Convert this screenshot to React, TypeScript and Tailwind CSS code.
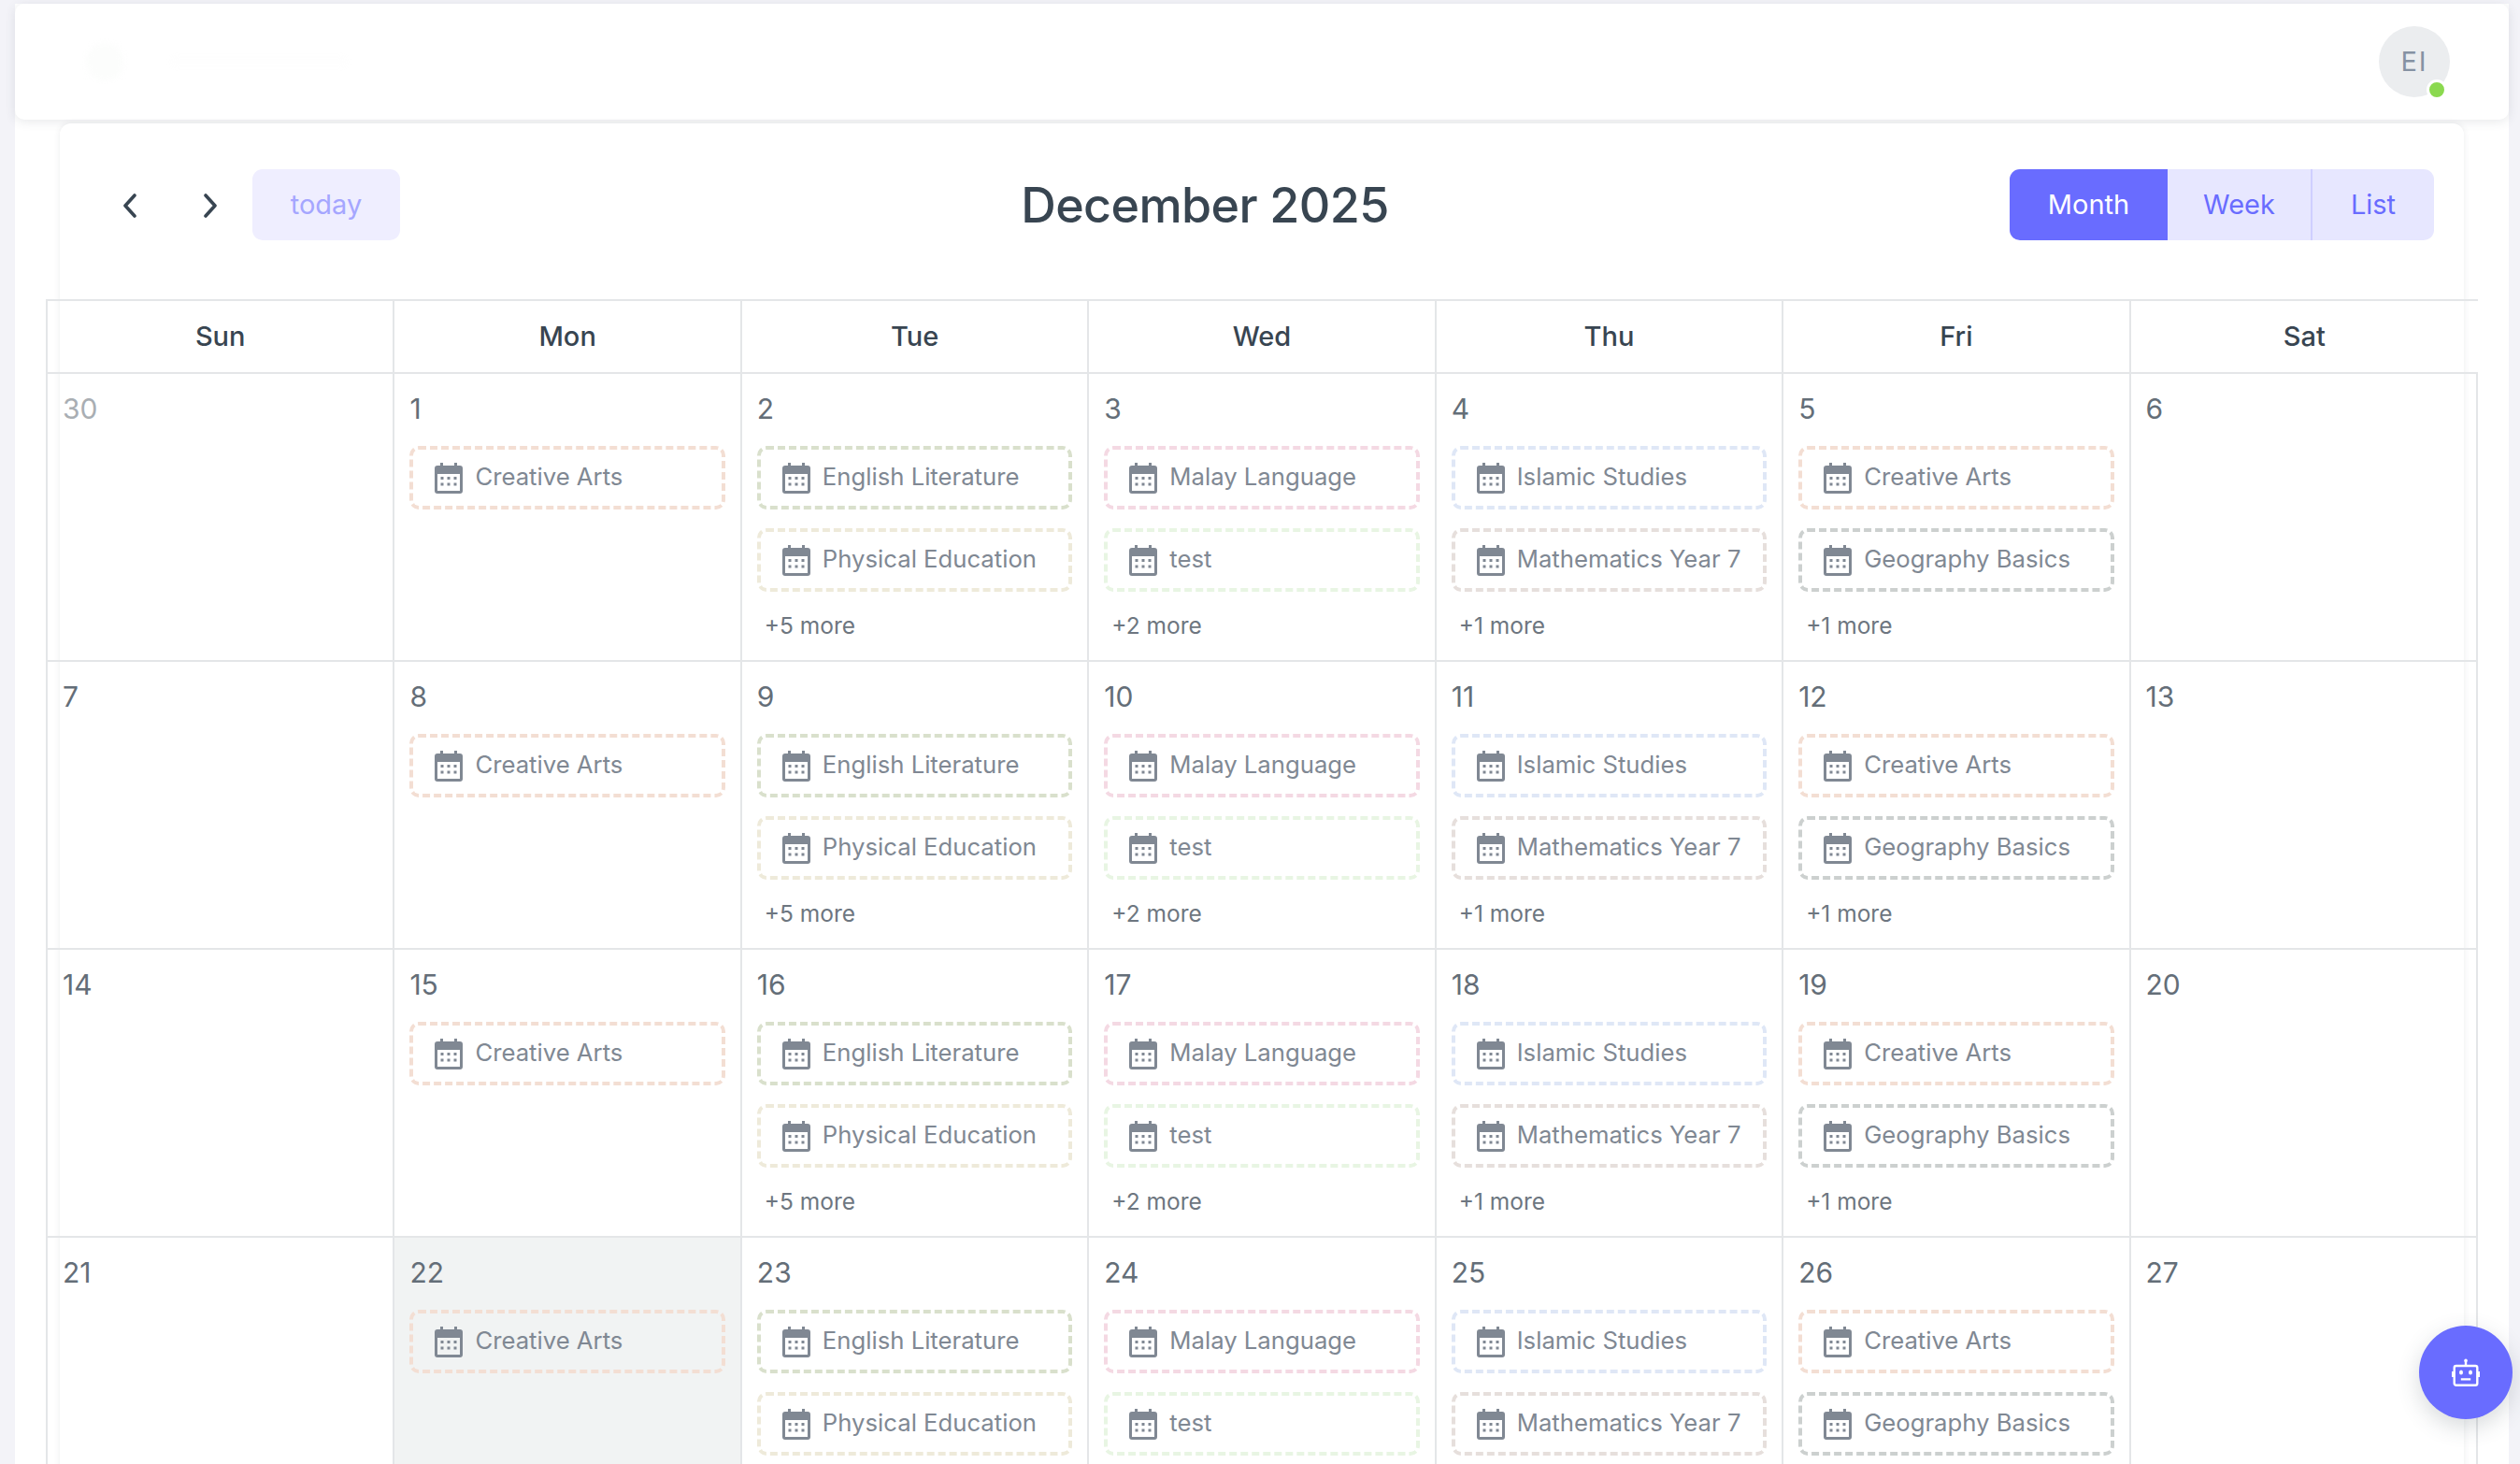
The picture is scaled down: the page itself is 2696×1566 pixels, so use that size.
import { FC } from "react";

interface EventItem {
  title: string;
  border: string;
}

const creative = { title: "Creative Arts", border: "border-[#f3ded3]" };

const columns: { events: EventItem[]; more?: string }[] = [
  { events: [] },
  { events: [creative] },
  {
    events: [
      { title: "English Literature", border: "border-[#d9e0cc]" },
      { title: "Physical Education", border: "border-[#eeeada]" },
    ],
    more: "+5 more",
  },
  {
    events: [
      { title: "Malay Language", border: "border-[#f4d9e3]" },
      { title: "test", border: "border-[#e8f5e3]" },
    ],
    more: "+2 more",
  },
  {
    events: [
      { title: "Islamic Studies", border: "border-[#dfe7f6]" },
      { title: "Mathematics Year 7", border: "border-[#e6dfdc]" },
    ],
    more: "+1 more",
  },
  {
    events: [
      creative,
      { title: "Geography Basics", border: "border-[#ccd0cf]" },
    ],
    more: "+1 more",
  },
  { events: [] },
];

const weekdays = ["Sun", "Mon", "Tue", "Wed", "Thu", "Fri", "Sat"];
const weeks = [
  [30, 1, 2, 3, 4, 5, 6],
  [7, 8, 9, 10, 11, 12, 13],
  [14, 15, 16, 17, 18, 19, 20],
  [21, 22, 23, 24, 25, 26, 27],
];

const CalendarIcon = () => (
  <svg viewBox="0 0 30 33" className="h-[33px] w-[30px] shrink-0 text-[#808893]" fill="currentColor">
    <path
      fillRule="evenodd"
      d="M6 0h3v3h12V0h3v3h3a3 3 0 0 1 3 3v24a3 3 0 0 1-3 3H3a3 3 0 0 1-3-3V6a3 3 0 0 1 3-3h3V0ZM3 12v18h24V12H3Z"
    />
    <rect x="6.5" y="15" width="3" height="3" />
    <rect x="13.5" y="15" width="3" height="3" />
    <rect x="20.5" y="15" width="3" height="3" />
    <rect x="6.5" y="21.5" width="3" height="3" />
    <rect x="13.5" y="21.5" width="3" height="3" />
    <rect x="20.5" y="21.5" width="3" height="3" />
  </svg>
);

const BotIcon = () => (
  <svg viewBox="0 0 30 30" className="h-[30px] w-[30px]" fill="none" stroke="white" strokeWidth="2.4">
    <rect x="2.7" y="8" width="24.6" height="20.8" rx="2" />
    <path d="M15 3v5M9.8 22.4h10.4" />
    <circle cx="15" cy="2.4" r="1.8" fill="white" stroke="none" />
    <ellipse cx="10" cy="15" rx="2" ry="2.5" fill="white" stroke="none" />
    <ellipse cx="20" cy="15" rx="2" ry="2.5" fill="white" stroke="none" />
    <path d="M.8 14v6M29.2 14v6" />
  </svg>
);

const Chevron = ({ d }: { d: string }) => (
  <button className="flex h-[76px] w-[86px] items-center justify-center pt-0.5">
    <svg viewBox="0 0 16 26" className="h-[26px] w-4" fill="none" stroke="#384551" strokeWidth="3.6" strokeLinecap="round" strokeLinejoin="round">
      <path d={d} />
    </svg>
  </button>
);

const EventChip: FC<EventItem> = ({ title, border }) => (
  <div className={`flex h-[68px] items-center gap-[13px] rounded-[10px] border-4 border-dashed px-[23px] ${border}`}>
    <CalendarIcon />
    <span className="mb-0.5 whitespace-nowrap text-[25.7px] leading-none text-[#808893]">{title}</span>
  </div>
);

export default function App() {
  return (
    <div className="h-screen overflow-hidden bg-[#f3f3f8] pl-4 pr-3 pt-1 font-[Inter,sans-serif]">
      <div className="flex h-full flex-col bg-white">
        <header className="flex h-[124px] shrink-0 items-center justify-between rounded-[10px] bg-white pl-[76px] pr-[63px] shadow-[0_2px_12px_rgba(56,69,81,0.12)]">
          {/* the page title sits here almost faded out */}
          <div className="flex items-center gap-[50px]">
            <div className="h-10 w-10 rounded-full bg-[#fcfdfc] blur-[3px]" />
            <div className="h-3 w-[190px] rounded bg-[#fefefe] blur-[3px]" />
          </div>
          <div className="relative flex h-[76px] w-[76px] items-center justify-center rounded-full bg-[#ebedef] text-[29px] tracking-[2px] text-[#8592a3]">
            EI
            <span className="absolute -bottom-[3px] right-[3px] h-[22px] w-[22px] rounded-full border-[3px] border-white bg-[#8bd94f]" />
          </div>
        </header>

        <main className="mx-12 mt-1 flex-1 rounded-t-xl bg-white shadow-[0_0_6px_rgba(56,69,81,0.1)]">
          <div className="flex h-[188px] items-start justify-between px-8 pt-[49px]">
            <div className="flex items-center">
              <Chevron d="M13 2 3 13l10 11" />
              <Chevron d="M3 2l10 11L3 24" />
              <button className="ml-0.5 h-[76px] w-[158px] rounded-[11px] bg-[#efeeff] text-[29px] text-[#a5a6ff]">today</button>
            </div>
            <h2 className="text-[52px] font-medium leading-[78px] tracking-[-0.6px] text-[#384551]">December 2025</h2>
            <div className="flex h-[76px] overflow-hidden rounded-[11px] text-[29px]">
              <button className="w-[169px] bg-[#696cff] text-white">Month</button>
              <button className="w-[155px] border-r-2 border-[#cfcfff] bg-[#e7e7ff] text-[#696cff]">Week</button>
              <button className="w-[130px] bg-[#e7e7ff] text-[#696cff]">List</button>
            </div>
          </div>

          <div className="-mx-[15px]">
            <div className="grid h-[80px] grid-cols-7 border-y-2 border-l-2 border-[#e4e6e8] text-[29px] font-medium text-[#384551]">
              {weekdays.map((day, i) => (
                <div key={day} className={`flex items-center justify-center ${i < 6 ? "border-r-2 border-[#e4e6e8]" : ""}`}>
                  {day}
                </div>
              ))}
            </div>
            {weeks.map((week, w) => (
              <div key={w} className="grid h-[308px] grid-cols-7 border-l-2 border-[#e4e6e8]">
                {week.map((day, i) => (
                  <div
                    key={day}
                    className={`border-b-2 border-r-2 border-[#e4e6e8] px-4 pt-[17px] ${day === 22 ? "bg-[#f1f3f3]" : ""}`}
                  >
                    <div className={`h-[40px] text-[30px] leading-[40px] ${day === 30 ? "text-[#a9aeb3]" : "text-[#646e78]"}`}>{day}</div>
                    <div className="mt-5 flex flex-col gap-5">
                      {columns[i].events.map((e) => (
                        <EventChip key={e.title} {...e} />
                      ))}
                    </div>
                    {/* last week runs off the bottom of the page before its "more" link */}
                    {columns[i].more && w < 3 && (
                      <div className="mt-[20px] pl-2 text-[24.5px] leading-[32px] text-[#6d7680]">{columns[i].more}</div>
                    )}
                  </div>
                ))}
              </div>
            ))}
          </div>
        </main>
      </div>

      <button className="fixed left-[2588px] top-[1418px] flex h-[100px] w-[100px] items-center justify-center rounded-full bg-[#696cff] shadow-[0_8px_24px_rgba(56,69,81,0.2)]">
        <BotIcon />
      </button>
    </div>
  );
}
